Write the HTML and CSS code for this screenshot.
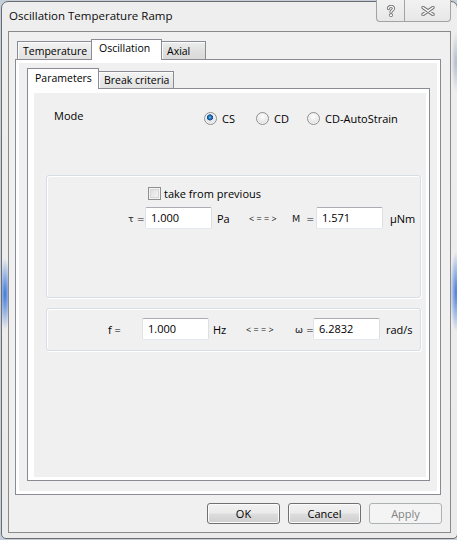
FILE: index.html
```html
<!DOCTYPE html>
<html>
<head>
<meta charset="utf-8">
<title>Oscillation Temperature Ramp</title>
<link rel="stylesheet" href="styles.css">
</head>
<body>
<div class="window">
  <div class="titlebar">
    <span class="title">Oscillation Temperature Ramp</span>
    <div class="caption">
      <span class="cbtn help">
        <svg width="10" height="12" viewBox="0 0 10 12">
          <path d="M2.5 3.6 C2.5 0.8 7.5 0.8 7.5 3.4 C7.5 5.2 5 5.2 5 7.2" fill="none" stroke="#7a7a7a" stroke-width="3.2" stroke-linecap="round"/>
          <path d="M2.5 3.6 C2.5 0.8 7.5 0.8 7.5 3.4 C7.5 5.2 5 5.2 5 7.2" fill="none" stroke="#fff" stroke-width="1.2" stroke-linecap="round"/>
          <circle cx="5" cy="10.2" r="1.6" fill="#fff" stroke="#7a7a7a" stroke-width="1"/>
        </svg>
      </span>
      <span class="cbtn close">
        <svg width="14" height="10" viewBox="0 0 14 10">
          <path d="M2 1.5 L12 8.5 M12 1.5 L2 8.5" fill="none" stroke="#7a7a7a" stroke-width="3.4" stroke-linecap="round"/>
          <path d="M2 1.5 L12 8.5 M12 1.5 L2 8.5" fill="none" stroke="#fff" stroke-width="1.4" stroke-linecap="round"/>
        </svg>
      </span>
    </div>
  </div>
  <div class="client">
    <div class="tabs">
      <div class="strip">
        <span class="tab tab-temp">Temperature</span>
        <span class="tab tab-osc selected">Oscillation</span>
        <span class="tab tab-axial">Axial</span>
      </div>
      <div class="panel outer-panel">
        <div class="panel-body outer-body">
          <div class="tabs inner-tabs">
            <div class="strip">
              <span class="tab tab-params selected">Parameters</span>
              <span class="tab tab-break">Break criteria</span>
            </div>
            <div class="panel inner-panel">
              <div class="page">
                <div class="mode-row">
                  <span class="mode-label">Mode</span>
                  <span class="radio-item r1"><span class="radio checked"></span>CS</span>
                  <span class="radio-item r2"><span class="radio"></span>CD</span>
                  <span class="radio-item r3"><span class="radio"></span>CD-AutoStrain</span>
                </div>
                <div class="group group-stress">
                  <div class="check-row"><span class="checkbox"></span><span class="check-label">take from previous</span></div>
                  <div class="field-row row-stress">
                    <span class="sym w-tau">τ&nbsp;=</span>
                    <span class="input">1.000</span>
                    <span class="unit w-pa">Pa</span>
                    <span class="arrows w-arr1">&lt; = = &gt;</span>
                    <span class="sym w-m">M&nbsp;&nbsp;=</span>
                    <span class="input">1.571</span>
                    <span class="unit w-unm">µNm</span>
                  </div>
                </div>
                <div class="group group-freq">
                  <div class="field-row row-freq">
                    <span class="lbl w-f">f =</span>
                    <span class="input">1.000</span>
                    <span class="unit w-hz">Hz</span>
                    <span class="arrows w-arr2">&lt; = = &gt;</span>
                    <span class="sym w-w">ω =</span>
                    <span class="input">6.2832</span>
                    <span class="unit w-rad">rad/s</span>
                  </div>
                </div>
              </div>
            </div>
          </div>
        </div>
      </div>
    </div>
    <div class="buttons">
      <span class="btn">OK</span>
      <span class="btn">Cancel</span>
      <span class="btn disabled">Apply</span>
    </div>
  </div>
</div>
</body>
</html>
```

FILE: styles.css
```css
html, body {
  margin: 0;
  padding: 0;
}

body {
  width: 457px;
  height: 540px;
  overflow: hidden;
  background: #c5cfdb;
  font-family: "Open Sans", "Noto Sans", sans-serif;
  font-size: 11px;
  color: #000;
}

.window {
  margin: 1px 0 0 1px;
  width: 457px;
  height: 538px;
  box-sizing: border-box;
  border: 1px solid #6c6c6c;
  border-radius: 7px 7px 5px 5px;
  padding: 0 6px 5px 6px;
  display: flex;
  flex-direction: column;
  background:
    radial-gradient(ellipse 6px 36px at 3px 292px, rgba(30, 100, 215, 0.85), rgba(30, 100, 215, 0) 100%),
    radial-gradient(ellipse 6px 40px at 454px 290px, rgba(30, 100, 215, 0.8), rgba(30, 100, 215, 0) 100%),
    radial-gradient(ellipse 5px 30px at 454px 60px, rgba(120, 140, 170, 0.5), rgba(120, 140, 170, 0) 100%),
    linear-gradient(#eeeeee, #ebebeb);
}

.titlebar {
  height: 29px;
  display: flex;
  align-items: flex-start;
  flex: none;
}

.title {
  padding: 6px 0 0 1px;
  font-size: 11.5px;
  line-height: 16px;
  color: #0b0b0b;
}

.caption {
  margin-left: auto;
  margin-top: -2px;
  display: flex;
}

.cbtn {
  height: 22px;
  box-sizing: border-box;
  border: 1px solid #a3a3a3;
  border-top: none;
  display: flex;
  align-items: center;
  justify-content: center;
  background: linear-gradient(#f2f2f2, #e7e7e7);
}

.help {
  width: 28px;
  border-right: none;
  border-radius: 0 0 0 4px;
  padding-top: 1px;
}

.close {
  width: 47px;
  border-radius: 0 0 4px 0;
}

.client {
  flex: 1;
  border: 1px solid #8a8a8a;
  background: #f0f0f0;
  display: flex;
  flex-direction: column;
  padding: 7px 9px 8px 6px;
}

.tabs {
  display: flex;
  flex-direction: column;
}

.strip {
  display: flex;
  align-items: flex-end;
  height: 20px;
  flex: none;
}

.tab {
  box-sizing: border-box;
  border: 1px solid #898c95;
  border-bottom: none;
  font-size: 10.5px;
  line-height: 14px;
  white-space: nowrap;
  background: linear-gradient(#f3f3f3, #e9e9e9 50%, #e1e1e1);
  box-shadow: inset 1px 1px 0 #fbfbfb;
}

.tab.selected {
  position: relative;
  z-index: 1;
  background: #ffffff;
  box-shadow: none;
  margin-bottom: -1px;
}

.tab-temp {
  margin-left: 2px;
  width: 75px;
  height: 18px;
  padding: 2px 0 0 5px;
}

.tab-osc {
  margin-left: -1px;
  width: 71px;
  height: 21px;
  padding: 1px 0 0 7px;
}

.tab-axial {
  margin-left: -1px;
  width: 45px;
  height: 18px;
  padding: 2px 0 0 5px;
  background: linear-gradient(#ededed, #e0e0e0 50%, #d9d9d9);
}

.panel {
  box-sizing: border-box;
  border: 1px solid #898c95;
  background: #ffffff;
}

.outer-panel {
  width: 426px;
  height: 436px;
  padding: 3px;
}

.panel-body {
  background: #f0f0f0;
  height: 100%;
}

.inner-tabs {
  padding: 5px 0 0 8px;
}

.tab-params {
  width: 72px;
  height: 21px;
  padding: 2px 0 0 7px;
}

.tab-break {
  margin-left: -1px;
  width: 76px;
  height: 17px;
  padding: 1px 0 0 5px;
}

.inner-panel {
  width: 403px;
  height: 393px;
  padding: 4px 3px 3px 6px;
}

.page {
  background: #f0f0f0;
  height: 100%;
  overflow: hidden;
}

.mode-row {
  display: flex;
  margin: 15px 0 0 20px;
  height: 18px;
  line-height: 15px;
}

.mode-label {
  width: 150px;
  flex: none;
}

.radio-item {
  display: flex;
  align-items: center;
  margin-top: 3px;
  height: 15px;
  flex: none;
}

.r1 { width: 52px; }
.r2 { width: 51px; }

.radio {
  width: 13px;
  height: 13px;
  box-sizing: border-box;
  border-radius: 50%;
  border: 1px solid #8e8f8f;
  margin-right: 5px;
  background: radial-gradient(circle at 50% 35%, #ffffff 0, #f1f1f1 35%, #d2d2d2 100%);
  box-shadow: inset 0 0 0 1px #f4f4f4;
}

.radio.checked {
  background:
    radial-gradient(circle at 45% 40%, #7ec3f0 0, #2a80c8 1.3px, #0d4a8c 2.8px, rgba(13, 74, 140, 0) 3.4px),
    radial-gradient(circle at 50% 35%, #ffffff 0, #f1f1f1 35%, #d2d2d2 100%);
}

.group {
  margin-left: 12px;
  width: 375px;
  box-sizing: border-box;
  border: 1px solid #d5dfe5;
  border-radius: 3px;
  box-shadow: inset 1px 1px 0 #ffffff, 1px 1px 0 #ffffff;
}

.group-stress {
  margin-top: 49px;
  height: 123px;
}

.group-freq {
  margin-top: 10px;
  height: 43px;
  padding-top: 9px;
}

.check-row {
  display: flex;
  align-items: center;
  margin: 10px 0 0 101px;
  height: 15px;
  line-height: 15px;
}

.checkbox {
  width: 13px;
  height: 13px;
  box-sizing: border-box;
  border: 1px solid #8e8f8f;
  background: linear-gradient(135deg, #dcdcdc, #f8f8f8);
  box-shadow: inset 0 0 0 1px #f4f4f4, inset 0 0 0 2px #d6d6d6;
  margin-right: 3px;
}

.field-row {
  display: flex;
  align-items: center;
  height: 22px;
  line-height: 15px;
}

.row-stress {
  margin-top: 6px;
  padding-left: 81px;
}

.row-freq {
  padding-left: 61px;
}

.field-row > span {
  flex: none;
  white-space: nowrap;
}

.sym {
  font-family: "DejaVu Sans", sans-serif;
  font-size: 9.5px;
  color: #222;
}

.arrows {
  font-size: 9px;
  color: #111;
}

.input {
  width: 67px;
  height: 22px;
  box-sizing: border-box;
  border: 1px solid;
  border-color: #abadb3 #dbdfe6 #e3e9ef #e2e3ea;
  border-radius: 2px;
  background: #ffffff;
  padding-left: 5px;
  line-height: 20px;
}

.w-tau { width: 17px; }
.w-pa { margin-left: 5px; width: 32px; }
.w-arr1 { width: 43px; }
.w-m { width: 24px; }
.w-unm { margin-left: 7px; }

.w-f { width: 34px; }
.w-hz { margin-left: 4px; width: 33px; }
.w-arr2 { width: 49px; }
.w-w { width: 18px; }
.w-rad { margin-left: 6px; }

.buttons {
  display: flex;
  justify-content: flex-end;
  gap: 8px;
  margin-top: 8px;
  margin-right: -1px;
}

.btn {
  width: 73px;
  height: 21px;
  box-sizing: border-box;
  border: 1px solid #707070;
  border-radius: 3px;
  background: linear-gradient(#f2f2f2 0%, #ebebeb 48%, #dddddd 52%, #cfcfcf 100%);
  box-shadow: inset 0 0 0 1px #fbfbfb;
  text-align: center;
  line-height: 19px;
  font-size: 11px;
}

.btn.disabled {
  border-color: #adb2b5;
  background: #f4f4f4;
  box-shadow: none;
  color: #838383;
}
```
